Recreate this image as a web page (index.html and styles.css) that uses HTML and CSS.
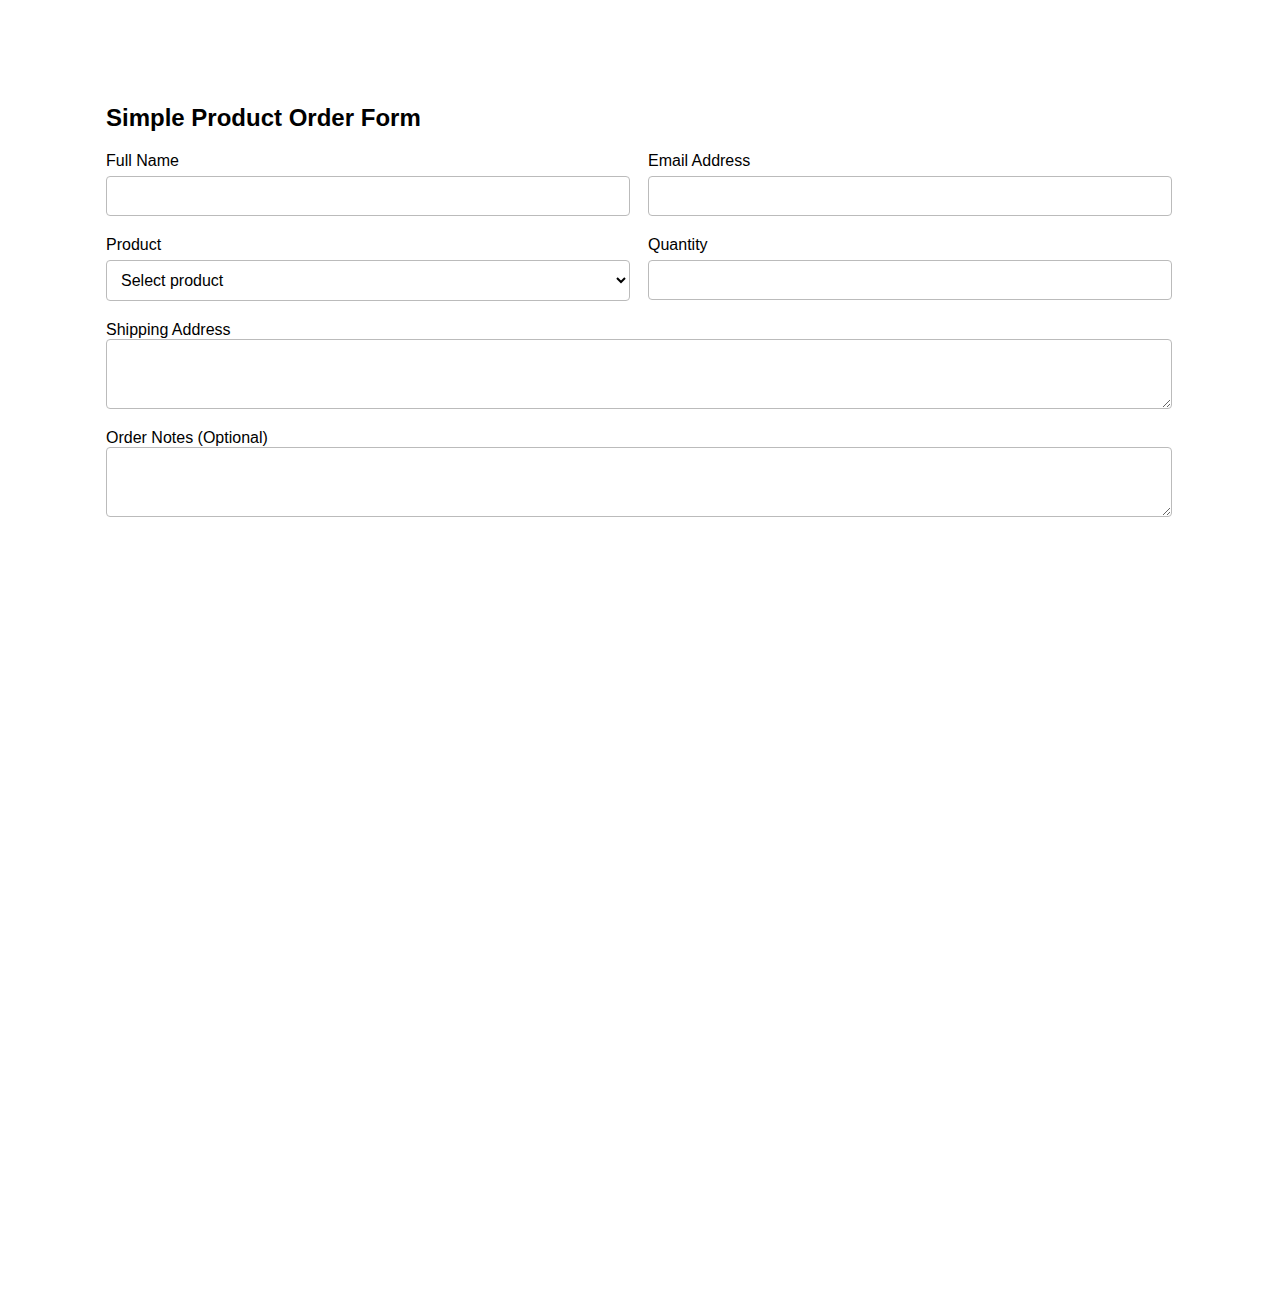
FILE: index.html
```html
<!DOCTYPE html>
<html lang="en">
<head>
    <meta charset="UTF-8">
    <meta name="viewport" content="width=device-width, initial-scale=1.0">
    <title>Simple Product Order Form</title>
    <link rel="stylesheet" href="styles.css">
</head>
<body>
    <div class="container">
        <h1>Simple Product Order Form</h1>
        <form class="order-form">
            <div class="row">
                <div class="field">
                    <label for="name">Full Name</label>
                    <input type="text" id="name">
                </div>
                <div class="field">
                    <label for="email">Email Address</label>
                    <input type="email" id="email">
                </div>
            </div>
            <div class="row">
                <div class="field">
                    <label for="product">Product</label>
                    <select id="product">
                        <option value="">Select product</option>
                        <option value="a">Product A</option>
                        <option value="b">Product B</option>
                        <option value="c">Product C</option>
                    </select>
                </div>
                <div class="field">
                    <label for="qty">Quantity</label>
                    <input type="number" id="qty" min="1">
                </div>
            </div>
            <div class="field wide">
                <label for="address">Shipping Address</label>
                <textarea id="address"></textarea>
            </div>
            <div class="field wide">
                <label for="notes">Order Notes (Optional)</label>
                <textarea id="notes"></textarea>
            </div>
        </form>
    </div>
</body>
</html>
```

FILE: styles.css
```css
body {
    font-family: "Liberation Sans", Arial, sans-serif;
    color: #000;
    background: #fff;
    margin: 0;
    padding: 104px 0 40px;
}
.container {
    max-width: 1066px;
    margin: 0 auto;
}
h1 {
    font-size: 24px;
    margin: 0 0 20px;
}
.row {
    display: flex;
    gap: 18px;
    margin-bottom: 20px;
}
.row .field {
    flex: 1;
}
.row label {
    display: block;
    margin-bottom: 6px;
}
label {
    font-size: 16px;
}
input, select, textarea {
    box-sizing: border-box;
    width: 100%;
    border: 1px solid #bbb;
    border-radius: 4px;
    font-family: inherit;
    font-size: 16px;
    background: #fff;
}
input {
    height: 40px;
    padding: 0 10px;
}
select {
    height: 41px;
    padding: 0 10px;
    color: #000;
}
.wide {
    margin-bottom: 20px;
}
.wide label {
    display: block;
}
textarea {
    display: block;
    height: 70px;
    padding: 10px;
}
```
